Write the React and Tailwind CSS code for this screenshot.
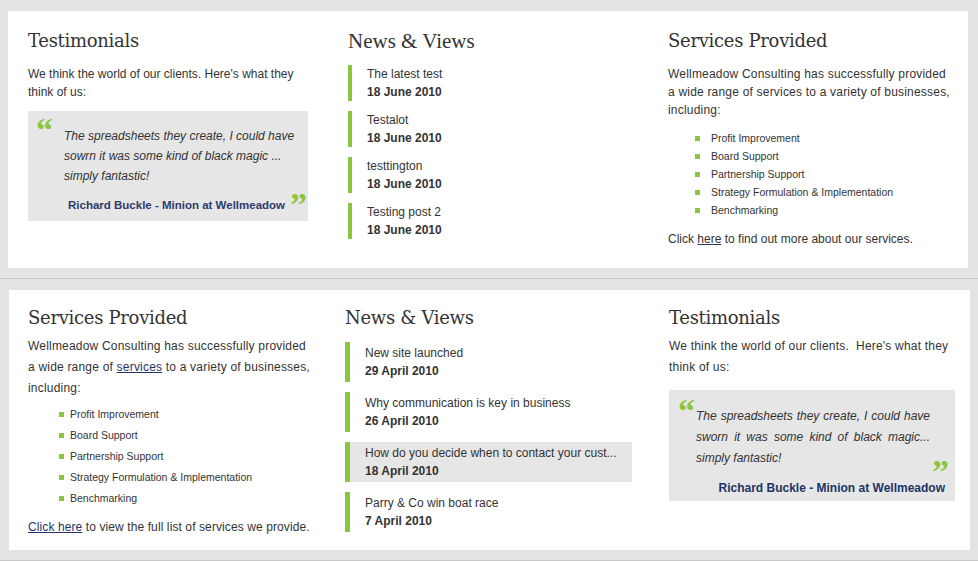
const green = "bg-[#8cc63f]";

const topNews = [
  { title: "The latest test", date: "18 June 2010" },
  { title: "Testalot", date: "18 June 2010" },
  { title: "testtington", date: "18 June 2010" },
  { title: "Testing post 2", date: "18 June 2010" },
];

const bottomNews = [
  { title: "New site launched", date: "29 April 2010" },
  { title: "Why communication is key in business", date: "26 April 2010" },
  { title: "How do you decide when to contact your cust...", date: "18 April 2010", active: true },
  { title: "Parry & Co win boat race", date: "7 April 2010" },
];

const services = [
  "Profit Improvement",
  "Board Support",
  "Partnership Support",
  "Strategy Formulation & Implementation",
  "Benchmarking",
];

function Heading({ children, times }) {
  return (
    <h2
      className={
        "text-[#333] leading-[24px] " +
        (times
          ? "font-['Liberation_Serif',serif] text-[21px]"
          : "font-['DejaVu_Serif',serif] text-[18px] tracking-[-0.3px]")
      }
    >
      {children}
    </h2>
  );
}

function Bullets({ wide }) {
  return (
    <ul>
      {services.map((s) => (
        <li key={s} className="flex items-center text-[10.5px]">
          <span className={"w-[5px] h-[5px] " + green} />
          <span className={wide ? "ml-[11px]" : "ml-[6px]"}>{s}</span>
        </li>
      ))}
    </ul>
  );
}

function Quote({ close, className }) {
  return (
    <span
      className={
        "absolute font-['Liberation_Serif',serif] font-bold text-[34px] leading-none text-[#8cc63f] " +
        className
      }
    >
      {close ? "\u201D" : "\u201C"}
    </span>
  );
}

export default function App() {
  return (
    <div className="w-[978px] h-[561px] bg-[#e4e4e4] font-['Liberation_Sans',Arial,sans-serif] text-[12px] text-[#333] overflow-hidden">
      {/* first block */}
      <div className="pt-[11px] pb-[10px] pl-[8px] pr-[10px] border-b border-[#c8c8c8]">
        <div className="bg-white h-[257px] pl-[20px] pt-[18px] grid grid-cols-[280px_280px_280px] gap-x-[40px]">
          <div>
            <Heading>Testimonials</Heading>
            <p className="mt-[12px] leading-[18px]">
              We think the world of our clients. Here's what they think of us:
            </p>
            <div className="relative mt-[10px] h-[110px] bg-[#e6e6e6] pt-[15px] pl-[36px] pr-[8px]">
              <Quote className="left-[8px] top-[2px]" />
              <p className="italic leading-[20px]">
                The spreadsheets they create, I could have sowrn it was some kind of black magic ... simply fantastic!
              </p>
              <p className="mt-[11px] ml-[4px] text-[11.5px] font-bold leading-[16px] text-[#2d3b6c]">
                Richard Buckle - Minion at Wellmeadow
              </p>
              <Quote close className="right-[1px] top-[77px]" />
            </div>
          </div>

          <div>
            <Heading times>News &amp; Views</Heading>
            <div className="mt-[12px] flex flex-col gap-[10px]">
              {topNews.map((n) => (
                <div key={n.title} className="flex leading-[18px]">
                  <span className={"w-[4px] h-[36px] " + green} />
                  <div className="pl-[15px]">
                    <div>{n.title}</div>
                    <div className="font-bold">{n.date}</div>
                  </div>
                </div>
              ))}
            </div>
          </div>

          <div>
            <Heading>Services Provided</Heading>
            <p className="mt-[12px] w-[285px] leading-[18px] tracking-[0.2px]">
              Wellmeadow Consulting has successfully provided a wide range of services to a variety of businesses, including:
            </p>
            <div className="mt-[10px] ml-[27px] leading-[18px]">
              <Bullets wide />
            </div>
            <p className="mt-[11px] leading-[18px]">
              Click <a className="underline decoration-[#2b3a6b]">here</a> to find out more about our services.
            </p>
          </div>
        </div>
      </div>

      {/* second block */}
      <div className="pt-[11px] pb-[10px] pl-[9px] pr-[8px] border-b border-[#c8c8c8]">
        <div className="bg-white h-[260px] pl-[19px] pt-[16px] grid grid-cols-[280px_287px_286px] gap-x-[37px]">
          <div>
            <Heading>Services Provided</Heading>
            <p className="mt-[6px] w-[285px] leading-[21px] tracking-[0.2px]">
              Wellmeadow Consulting has successfully provided a wide range of{" "}
              <a className="underline text-[#24336a]">services</a> to a variety of businesses, including:
            </p>
            <div className="mt-[5px] ml-[31px] leading-[21px]">
              <Bullets />
            </div>
            <p className="mt-[8px] leading-[21px] whitespace-nowrap tracking-[0.1px]">
              <a className="underline text-[#24336a]">Click here</a> to view the full list of services we provide.
            </p>
          </div>

          <div>
            <Heading>News &amp; Views</Heading>
            <div className="mt-[12px] flex flex-col gap-[10px]">
              {bottomNews.map((n) => (
                <div
                  key={n.title}
                  className={"flex h-[40px] leading-[18px] " + (n.active ? "bg-[#e6e6e6]" : "")}
                >
                  <span className={"w-[5px] h-[40px] " + green} />
                  <div className="pl-[15px] pt-[2px] whitespace-nowrap">
                    <div>{n.title}</div>
                    <div className="font-bold">{n.date}</div>
                  </div>
                </div>
              ))}
            </div>
          </div>

          <div>
            <Heading>Testimonials</Heading>
            <p className="mt-[6px] leading-[21px] tracking-[0.2px]">
              We think the world of our clients.&nbsp; Here's what they think of us:
            </p>
            <div className="relative mt-[12px] h-[111px] bg-[#e6e6e6] pt-[16px] pl-[27px] pr-[25px]">
              <Quote className="left-[9px] top-[4px]" />
              <p className="italic leading-[21px] text-justify">
                The spreadsheets they create, I could have sworn it was some kind of black magic... simply fantastic!
              </p>
              <Quote close className="right-[6px] top-[65px]" />
              <p className="mt-[11px] text-right -mr-[15px] font-bold leading-[16px] text-[#203466]">
                Richard Buckle - Minion at Wellmeadow
              </p>
            </div>
          </div>
        </div>
      </div>
    </div>
  );
}
